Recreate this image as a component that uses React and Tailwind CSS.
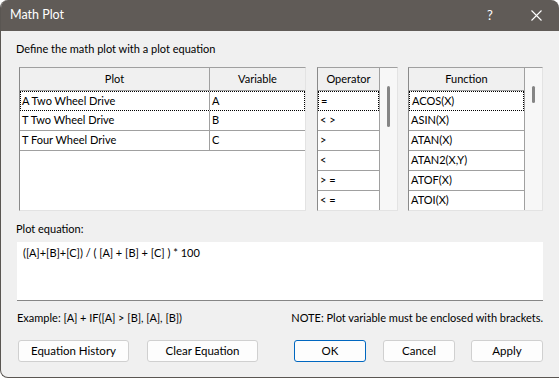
import React from "react";

const plots = [
  { name: "A Two Wheel Drive", v: "A" },
  { name: "T Two Wheel Drive", v: "B" },
  { name: "T Four Wheel Drive", v: "C" },
];
const operators = ["=", "< >", ">", "<", "> =", "< ="];
const functions = ["ACOS(X)", "ASIN(X)", "ATAN(X)", "ATAN2(X,Y)", "ATOF(X)", "ATOI(X)"];

const Btn = ({ children, primary, className = "" }) => (
  <button
    className={`h-[22px] rounded-[3px] bg-[#fdfdfd] text-[11.5px] text-black ${
      primary ? "border border-[#0067c0]" : "border border-[#d0d0d0]"
    } ${className}`}
  >
    {children}
  </button>
);

const ScrollCol = ({ thumb }) => (
  <div className="w-[17px] bg-[#f7f7f7] flex justify-center pt-[18px]">
    <div className={`w-[3px] rounded-full bg-[#858585] ${thumb}`} />
  </div>
);

const App = () => {
  return (
    <div
      className="w-[559px] h-[378px] flex flex-col bg-[#f0f0f0] border-l border-b border-[#5a5652] rounded-t-[8px] rounded-bl-[8px] overflow-hidden text-[11px] text-black"
      style={{ fontFamily: 'Lato, "Noto Sans", sans-serif' }}
    >
      {/* title bar */}
      <div className="h-[31px] bg-[#605b57] flex items-center text-white shrink-0">
        <span className="pl-[9px] text-[12.5px] flex-1">Math Plot</span>
        <span className="w-[46px] text-center text-[13px]">?</span>
        <span className="w-[46px] flex justify-center">
          <svg width="11" height="11" viewBox="0 0 11 11" stroke="white" strokeWidth="1.1">
            <path d="M0.5 0.5L10.5 10.5M10.5 0.5L0.5 10.5" />
          </svg>
        </span>
      </div>

      <div className="flex-1 flex flex-col pl-[15px] pr-[16px]">
        <div className="pt-[10px] h-[36px]">Define the math plot with a plot equation</div>

        {/* lists */}
        <div className="flex h-[144px] pl-[3px] gap-[11px]">
          <div className="w-[287px] flex flex-col bg-white border border-t-[#a0a0a0] border-l-[#8a8a8a] border-r-[#e3e3e3] border-b-[#e3e3e3]">
            <div className="flex h-[23px] bg-[#f0f0f0] border-b border-[#a0a0a0]">
              <div className="w-[190px] flex items-center justify-center border-r border-[#a0a0a0]">Plot</div>
              <div className="flex-1 flex items-center justify-center">Variable</div>
            </div>
            {plots.map((p, i) => (
              <div
                key={p.v}
                className={`flex h-[20px] ${i === 0 ? "border border-dotted border-black" : "border-b border-[#a0a0a0]"}`}
              >
                <div className={`w-[190px] pl-[2px] flex items-center border-r border-[#a0a0a0] ${i === 0 ? "-ml-px" : ""}`}>{p.name}</div>
                <div className="flex-1 pl-[2px] flex items-center">{p.v}</div>
              </div>
            ))}
          </div>

          <div className="w-[81px] flex bg-white border border-t-[#a0a0a0] border-l-[#8a8a8a] border-r-[#e3e3e3] border-b-[#e3e3e3] overflow-hidden">
            <div className="flex-1 flex flex-col border-r border-[#a0a0a0]">
              <div className="h-[23px] shrink-0 bg-[#f0f0f0] border-b border-[#a0a0a0] flex items-center justify-center">Operator</div>
              {operators.map((o, i) => (
                <div
                  key={o}
                  className={`h-[20px] shrink-0 pl-[2px] flex items-center ${i === 0 ? "border border-dotted border-black" : "border-b border-[#a0a0a0]"}`}
                >
                  {o}
                </div>
              ))}
            </div>
            <ScrollCol thumb="h-[41px]" />
          </div>

          <div className="w-[135px] -ml-[1px] flex bg-white border border-t-[#a0a0a0] border-l-[#8a8a8a] border-r-[#e3e3e3] border-b-[#e3e3e3] overflow-hidden">
            <div className="flex-1 flex flex-col border-r border-[#a0a0a0]">
              <div className="h-[23px] shrink-0 bg-[#f0f0f0] border-b border-[#a0a0a0] flex items-center justify-center">Function</div>
              {functions.map((f, i) => (
                <div
                  key={f}
                  className={`h-[20px] shrink-0 pl-[2px] flex items-center ${i === 0 ? "border border-dotted border-black" : "border-b border-[#a0a0a0]"}`}
                >
                  {f}
                </div>
              ))}
            </div>
            <ScrollCol thumb="h-[17px]" />
          </div>
        </div>

        <div className="h-[31px] pt-[10px]">Plot equation:</div>
        <div className="h-[59px] ml-[1px] bg-white border-b border-[#868686] px-[6px] pt-[3px]">
          ([A]+[B]+[C]) / ( [A] + [B] + [C] ) * 100
        </div>

        <div className="flex justify-between items-center h-[32px] pt-[2px] pl-[1px]">
          <span>Example: [A] + IF([A] &gt; [B], [A], [B])</span>
          <span>NOTE: Plot variable must be enclosed with brackets.</span>
        </div>

        <div className="flex items-center pt-[7px] pl-[2px]">
          <Btn className="w-[111px]">Equation History</Btn>
          <Btn className="w-[111px] ml-[18px]">Clear Equation</Btn>
          <Btn primary className="w-[72px] ml-[36px]">OK</Btn>
          <Btn className="w-[72px] ml-[17px]">Cancel</Btn>
          <Btn className="w-[72px] ml-[16px]">Apply</Btn>
        </div>
      </div>
    </div>
  );
};

export default App;
